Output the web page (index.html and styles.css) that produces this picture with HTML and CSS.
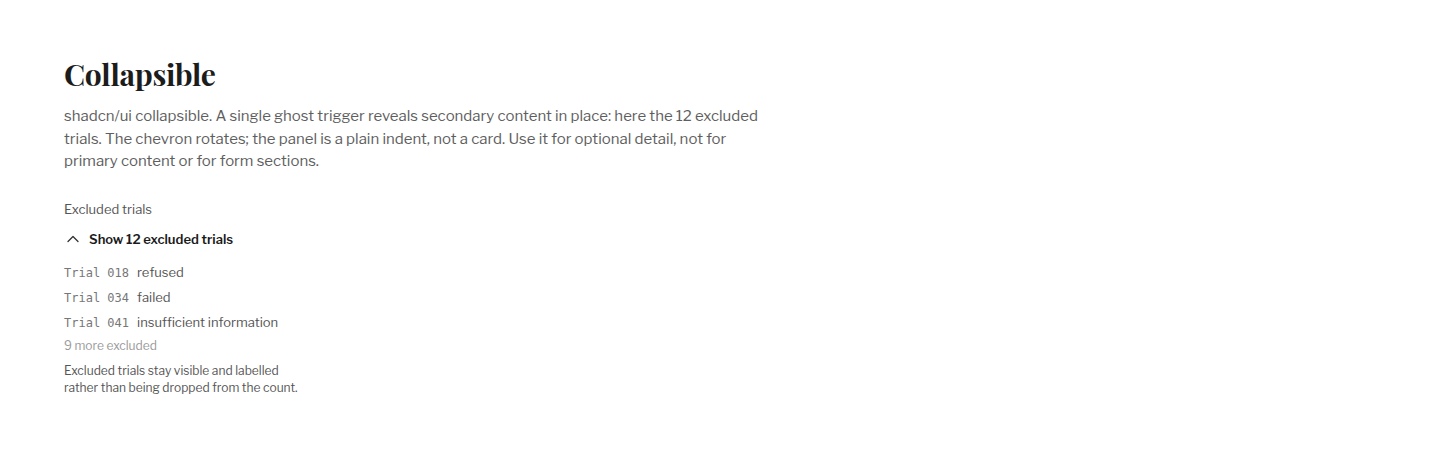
FILE: index.html
```html
<!DOCTYPE html>
<html lang="en">
<head>
<meta charset="utf-8">
<title>Collapsible</title>
<link rel="stylesheet" href="styles.css">
</head>
<body>
<main class="page">
  <h1 class="title">Collapsible</h1>
  <p class="lead">shadcn/ui collapsible. A single ghost trigger reveals secondary content in place: here the 12 excluded trials. The chevron rotates; the panel is a plain indent, not a card. Use it for optional detail, not for primary content or for form sections.</p>

  <section class="demo">
    <div class="label">Excluded trials</div>
    <button class="trigger" type="button">
      <svg class="chev" width="16" height="16" viewBox="0 0 16 16" fill="none" stroke="currentColor" stroke-width="1.3" stroke-linecap="round" stroke-linejoin="round"><path d="M3 10.5L8 5.5L13 10.5"/></svg>
      <span>Show 12 excluded trials</span>
    </button>
    <ul class="list">
      <li class="row"><span class="id">Trial 018</span><span class="reason">refused</span></li>
      <li class="row"><span class="id">Trial 034</span><span class="reason">failed</span></li>
      <li class="row"><span class="id">Trial 041</span><span class="reason">insufficient information</span></li>
    </ul>
    <div class="more">9 more excluded</div>
    <p class="note">Excluded trials stay visible and labelled rather than being dropped from the count.</p>
  </section>
</main>
</body>
</html>
```
FILE: styles.css
```css
html, body {
  margin: 0;
  padding: 0;
  background: #ffffff;
}
body {
  font-family: "Libre Franklin", "Open Sans", "Liberation Sans", sans-serif;
  color: #1f1f1f;
}
.page {
  padding: 54px 64px 0;
}
.title {
  font-family: "Playfair Display", "DejaVu Serif", "Liberation Serif", serif;
  font-weight: 700;
  font-size: 30px;
  line-height: 40px;
  margin: 0 0 11px;
  color: #1c1c1c;
  letter-spacing: -0.3px;
}
.lead {
  font-size: 15px;
  line-height: 22.5px;
  color: #5e5e5e;
  max-width: 700px;
  margin: 0 0 27px;
}
.demo {
  display: flex;
  flex-direction: column;
  align-items: flex-start;
}
.label {
  font-size: 13px;
  line-height: 18px;
  color: #555;
  margin-bottom: 12px;
}
.trigger {
  display: flex;
  align-items: center;
  gap: 8px;
  background: none;
  border: 0;
  padding: 0 0 0 1px;
  font: inherit;
  font-size: 13px;
  font-weight: 600;
  color: #1a1a1a;
  line-height: 18px;
  margin-bottom: 15px;
}
.chev {
  color: #333;
  flex: none;
}
.list {
  list-style: none;
  margin: 0;
  padding: 0;
  display: flex;
  flex-direction: column;
  gap: 7px;
}
.row {
  display: flex;
  align-items: baseline;
  gap: 8px;
  font-size: 13px;
  line-height: 18px;
  height: 18px;
  color: #555;
}
.id {
  font-family: "DejaVu Sans Mono", "Liberation Mono", monospace;
  font-size: 12px;
  line-height: 1;
  color: #777;
}
.more {
  font-size: 12px;
  line-height: 17px;
  color: #999;
  margin-top: 6px;
}
.note {
  font-size: 12px;
  line-height: 17px;
  color: #555;
  max-width: 240px;
  margin: 8px 0 0;
}
```
